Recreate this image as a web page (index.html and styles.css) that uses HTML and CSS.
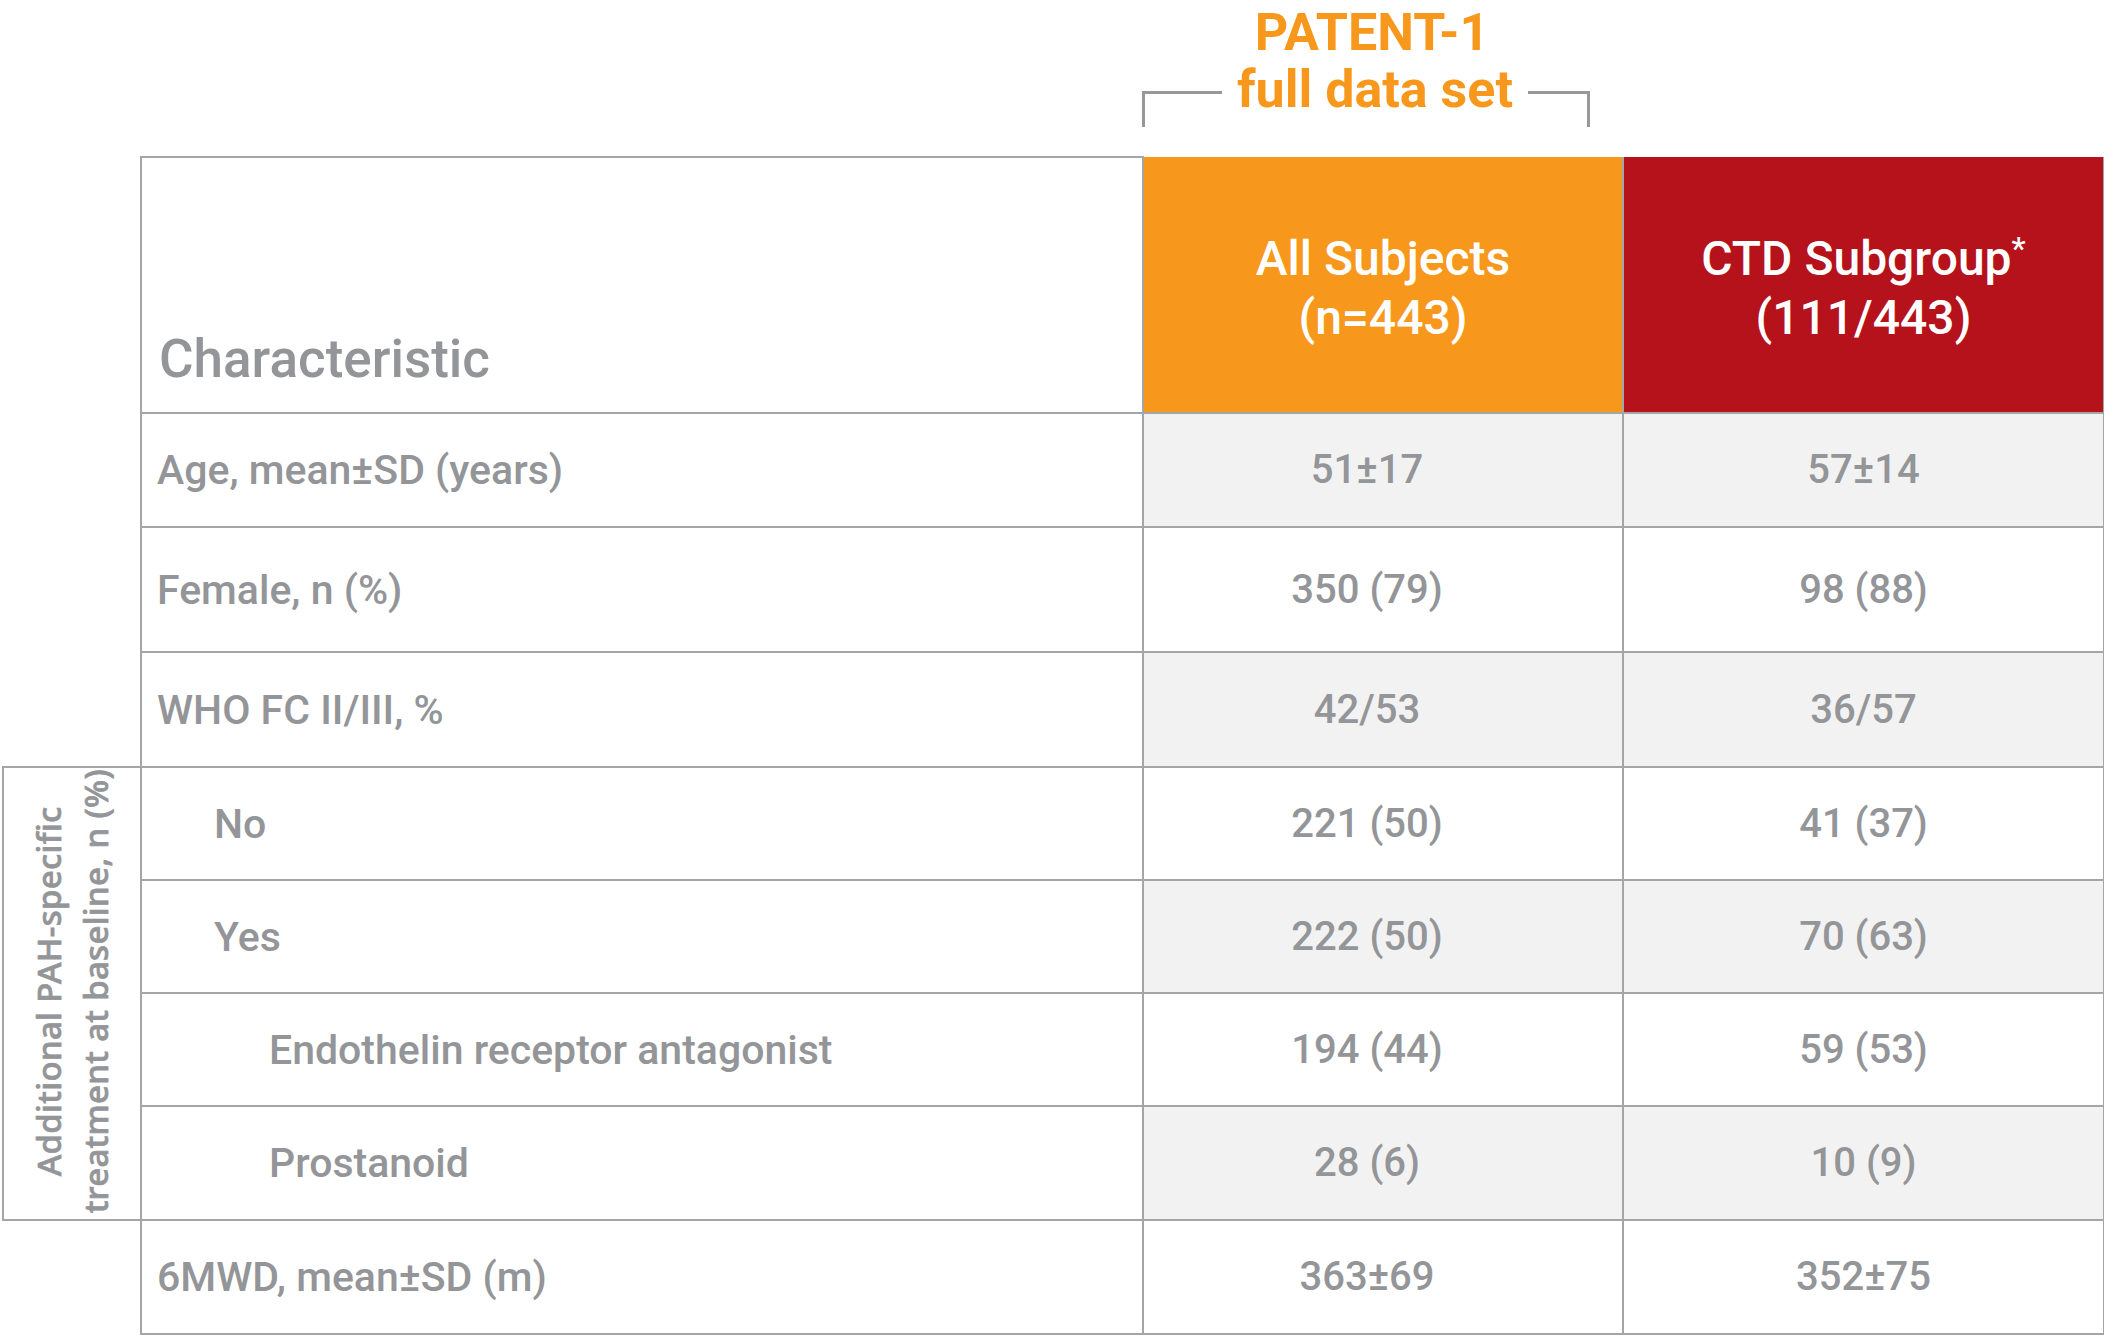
FILE: index.html
```html
<!DOCTYPE html>
<html lang="en">
<head>
<meta charset="utf-8">
<title>PATENT-1 baseline characteristics</title>
<link rel="stylesheet" href="styles.css">
</head>
<body>
<div class="page">
  <div class="study">
    <div class="study-name">PATENT-1</div>
    <div class="study-sub">
      <span class="bracket bracket-left"></span>
      <span class="study-sub-text">full data set</span>
      <span class="bracket bracket-right"></span>
    </div>
  </div>
  <table class="chars">
    <colgroup>
      <col class="c-group">
      <col class="c-label">
      <col class="c-a">
      <col class="c-b">
    </colgroup>
    <thead>
      <tr class="r-head">
        <th class="blank"></th>
        <th class="h-label">Characteristic</th>
        <th class="h-all">All Subjects<br>(n=443)</th>
        <th class="h-ctd">CTD Subgroup<span class="ast">*</span><br>(111/443)</th>
      </tr>
    </thead>
    <tbody>
      <tr class="r-age shade">
        <td class="blank"></td>
        <td class="label">Age, mean±SD (years)</td>
        <td class="val val-a">51±17</td>
        <td class="val val-b">57±14</td>
      </tr>
      <tr class="r-female">
        <td class="blank"></td>
        <td class="label">Female, n (%)</td>
        <td class="val val-a">350 (79)</td>
        <td class="val val-b">98 (88)</td>
      </tr>
      <tr class="r-who shade">
        <td class="blank"></td>
        <td class="label">WHO FC II/III, %</td>
        <td class="val val-a">42/53</td>
        <td class="val val-b">36/57</td>
      </tr>
      <tr class="r-113">
        <td class="group" rowspan="4"><div class="group-label">Additional PAH-specific<br>treatment at baseline, n (%)</div></td>
        <td class="label indent1">No</td>
        <td class="val val-a">221 (50)</td>
        <td class="val val-b">41 (37)</td>
      </tr>
      <tr class="r-113 shade">
        <td class="label indent1">Yes</td>
        <td class="val val-a">222 (50)</td>
        <td class="val val-b">70 (63)</td>
      </tr>
      <tr class="r-113">
        <td class="label indent2">Endothelin receptor antagonist</td>
        <td class="val val-a">194 (44)</td>
        <td class="val val-b">59 (53)</td>
      </tr>
      <tr class="r-114 shade">
        <td class="label indent2">Prostanoid</td>
        <td class="val val-a">28 (6)</td>
        <td class="val val-b">10 (9)</td>
      </tr>
      <tr class="r-114">
        <td class="blank"></td>
        <td class="label">6MWD, mean±SD (m)</td>
        <td class="val val-a">363±69</td>
        <td class="val val-b">352±75</td>
      </tr>
    </tbody>
  </table>
</div>
</body>
</html>
```

FILE: styles.css
```css
* {
  box-sizing: border-box;
}

html,
body {
  margin: 0;
  padding: 0;
  background: #ffffff;
}

body {
  width: 2104px;
  font-family: Roboto, "Liberation Sans", sans-serif;
  color: #939598;
}

.page {
  padding-left: 2px;
}

/* Study title with bracket */
.study {
  height: 156px;
  width: 448px;
  margin-left: 1140px;
  padding-top: 4px;
  color: #f7981d;
  font-size: 52px;
  font-weight: 700;
  line-height: 57px;
}

.study-name {
  text-align: center;
  padding-left: 12px;
}

.study-sub {
  display: flex;
  justify-content: space-between;
  align-items: flex-start;
}

.study-sub-text {
  white-space: nowrap;
}

.bracket {
  margin-top: 30px;
  height: 36px;
  border-top: 3px solid #97989b;
}

.bracket-left {
  width: 80px;
  border-left: 3px solid #97989b;
}

.bracket-right {
  width: 62px;
  border-right: 3px solid #97989b;
}

/* Table */
.chars {
  border-collapse: collapse;
  table-layout: fixed;
  width: 2101px;
}

.c-group { width: 138px; }
.c-label { width: 1002px; }
.c-a { width: 480px; }
.c-b { width: 481px; }

.chars th,
.chars td {
  border: 2px solid #a4a5a7;
  padding: 0;
  font-weight: 500;
}

.chars .blank {
  border: none;
}

.r-head { height: 256px; }
.r-age { height: 114px; }
.r-female { height: 125px; }
.r-who { height: 115px; }
.r-113 { height: 113px; }
.r-114 { height: 114px; }

.chars .h-label {
  vertical-align: bottom;
  text-align: left;
  padding: 0 0 23px 17px;
  font-size: 53px;
  line-height: 60px;
  color: #939598;
}

.chars .h-all,
.chars .h-ctd {
  vertical-align: middle;
  text-align: center;
  padding-top: 6px;
  color: #ffffff;
  font-size: 48px;
  line-height: 59px;
}

.chars .h-all {
  background: #f7981d;
  border-top: none;
}

.chars .h-ctd {
  background: #b5121b;
  border-top: none;
}

.ast {
  font-size: 32px;
  line-height: 0;
  vertical-align: 16px;
}

.chars .label {
  font-size: 41px;
  line-height: 48px;
  padding-left: 15px;
  vertical-align: middle;
}

.chars .indent1 {
  padding-left: 72px;
}

.chars .indent2 {
  padding-left: 127px;
}

.chars .val {
  text-align: center;
  vertical-align: middle;
  font-size: 40px;
  line-height: 48px;
}

.chars .val-a {
  padding-right: 32px;
}

.shade .val {
  background: #f2f2f2;
}

.group {
  text-align: center;
  vertical-align: middle;
}

.group-label {
  display: inline-block;
  writing-mode: vertical-rl;
  transform: rotate(180deg);
  white-space: nowrap;
  font-family: "Noto Sans", "DejaVu Sans", sans-serif;
  font-weight: 500;
  font-size: 33px;
  line-height: 47px;
  letter-spacing: 0.3px;
  -webkit-text-stroke: 0.7px #939598;
  color: #939598;
}
```
